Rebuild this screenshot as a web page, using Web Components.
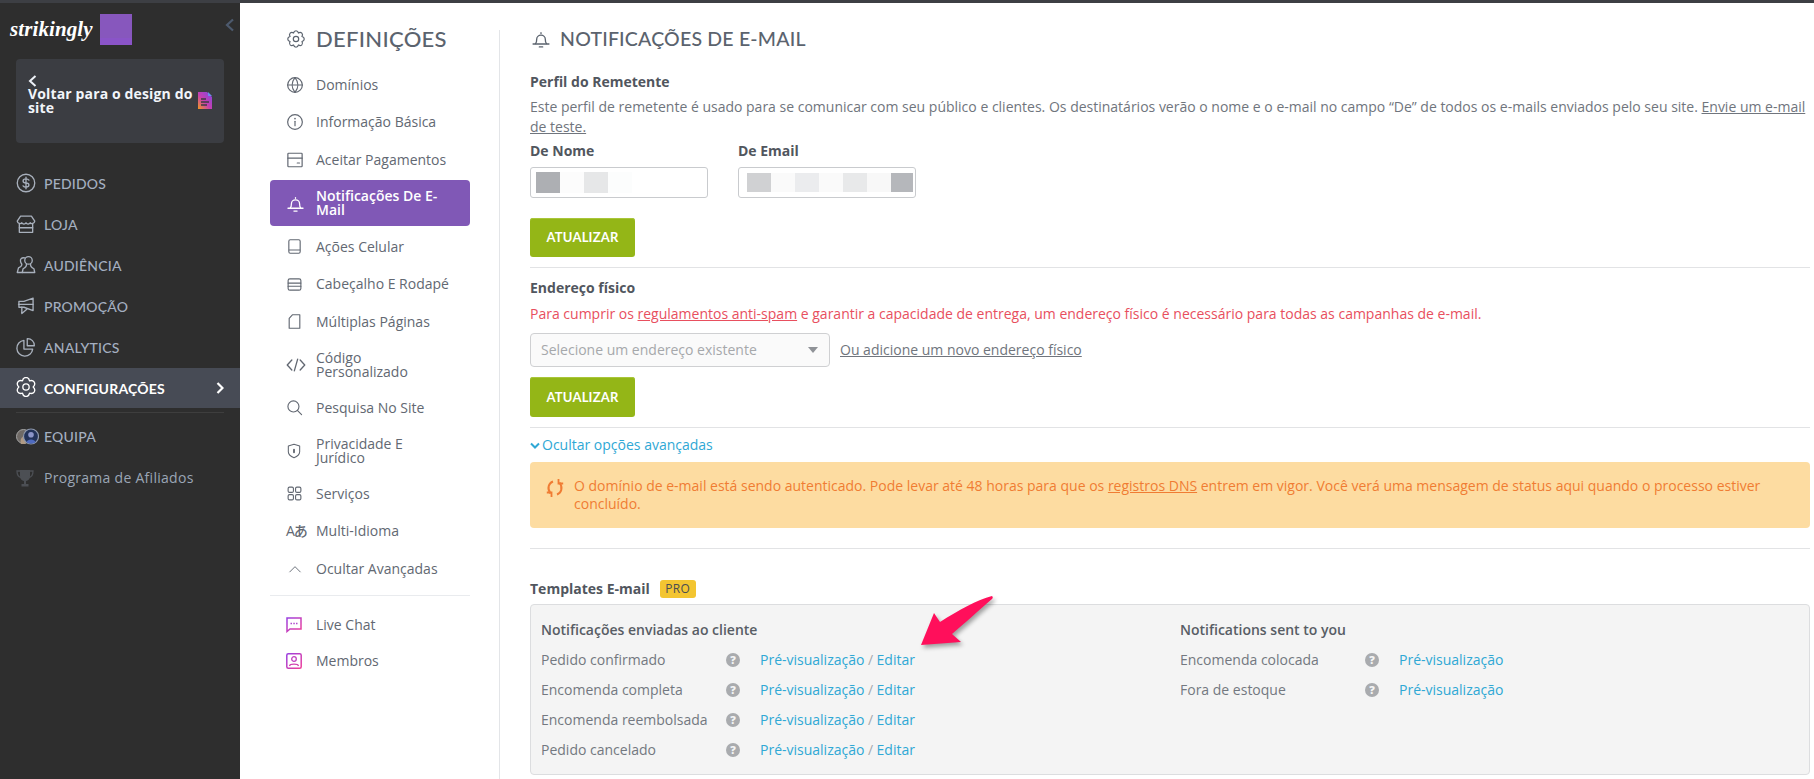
<!DOCTYPE html>
<html lang="pt"><head><meta charset="utf-8"><title>Notificações</title>
<style>
html,body{margin:0;padding:0;height:779px;overflow:hidden;background:#fff;font-family:"Open Sans",sans-serif}
</style></head><body>
<app-shell>
  <dark-sidebar slot="side"></dark-sidebar>
  <settings-menu slot="menu"></settings-menu>
  <email-panel slot="main"></email-panel>
</app-shell>
<script>
const S=(inner,vb='0 0 24 24',w=20,h=w,extra='')=>`<svg width="${w}" height="${h}" viewBox="${vb}" fill="none" stroke="currentColor" stroke-width="1.6" stroke-linecap="round" stroke-linejoin="round" ${extra}>${inner}</svg>`;
function gearPath(n,ro,ri,r0){let d='';for(let k=0;k<n;k++){const a=k*2*Math.PI/n-Math.PI/2,st=2*Math.PI/n;
 const p=(r,t)=>(12+r*Math.cos(t)).toFixed(2)+' '+(12+r*Math.sin(t)).toFixed(2);
 d+=(k?'L':'M')+p(ri,a-st*.5)+'Q'+p(ro*1.02,a-st*.3)+' '+p(ro,a)+'Q'+p(ro*1.02,a+st*.3)+' '+p(ri,a+st*.5);}
 return `<path d="${d}Z"/><circle cx="12" cy="12" r="${r0}"/>`;}
const gear=gearPath(8,11,8.6,3.6), gear6=gearPath(6,11.5,8.6,3.8);
const bell='<path d="M5.500 17.500c1-1 1.300-2.500 1.300-5a5.200 5.200 0 0 1 10.400 0c0 2.500.3 4 1.300 5"/><path d="M2.500 18h19"/><path d="M10 21.500h4"/><path d="M12 5.500v-1"/>';
const IC={
 dollar:'<circle cx="12" cy="12" r="10.500"/><path d="M15.500 8.500c-.7-1-2-1.500-3.500-1.500-2 0-3.500 1-3.500 2.500S10 12 12 12s3.500 1 3.500 2.500S14 17 12 17c-1.500 0-2.800-.5-3.500-1.500M12 5v14"/>',
 store:'<path d="M4 11.500V22h16V11.500"/><path d="M5.500 2.500h13l4 6c-.5 3-4 4-5.500 2-1 2-4 2-5 0-1 2-4 2-5 0-1.500 2-5 1-5.500-2z"/><path d="M4 16.500h16"/>',
 people:'<circle cx="15" cy="6.500" r="4.500"/><path d="M12.500 11c.5 2.500-1 4-4 5.500L7.500 21h15l-1-4.500c-3-1.500-4.500-3-4-5.500"/><path d="M10.500 3.500C7 2.500 4.500 5 5.500 8c.4 1.200 1 2.300 1.500 3 .2 2-1.500 3.500-4 4.500L1.500 21h6"/>',
 mega:'<path d="M20.500 2.500v15L9.500 13.500H3.500v-7h6z"/><path d="M3 10h17.500"/><path d="M7 13.500V21l6-5"/>',
 pie:'<path d="M9.500 4a9.500 9.500 0 1 0 10.500 10.500H9.500z"/><path d="M13.500 2a8 8 0 0 1 8.500 8.500h-8.500z"/>',
 globe:'<circle cx="12" cy="12" r="9.800"/><path d="M2.200 12h19.600M12 2.200c-5 6-5 13.600 0 19.600M12 2.200c5 6 5 13.600 0 19.600"/>',
 info:'<circle cx="12" cy="12" r="9.800"/><path d="M12 11v6"/><path d="M12 7.300v.4" stroke-width="2.200"/>',
 card:'<rect x="2.500" y="3" width="19" height="18" rx="1"/><path d="M2.500 9.500h19M15 16h3"/>',
 bell,
 book:'<rect x="4" y="2.500" width="16" height="19" rx="2"/><path d="M4.500 17h15"/>',
 layout:'<rect x="3" y="4" width="18" height="16" rx="2.500"/><path d="M3 10h18M3 14.500h18"/>',
 page:'<path d="M9 2.500h10.500v19h-15V7.500z"/>',
 code:'<path d="M7 6l-5.500 6L7 18M17 6l5.500 6L17 18M14 5l-4 14"/>',
 search:'<circle cx="10.500" cy="10.500" r="7.800"/><path d="M16 16l6 6"/>',
 shield:'<path d="M12 2l8.500 2.500v8.500c0 4-3.500 7-8.500 9-5-2-8.500-5-8.500-9V4.500z"/><path d="M12 10v4" stroke-width="2.800"/>',
 grid:'<rect x="3" y="3" width="7.500" height="7.500" rx="2"/><rect x="13.500" y="3" width="7.500" height="7.500" rx="2"/><rect x="3" y="13.500" width="7.500" height="7.500" rx="2"/><rect x="13.500" y="13.500" width="7.500" height="7.500" rx="2"/>',
 up:'<path d="M3 17l9-9 9 9"/>'
};
function def(name,html){customElements.define(name,class extends HTMLElement{
  constructor(){super();this.attachShadow({mode:'open'}).innerHTML=typeof html==='function'?html(this):html;}
});}

def('app-shell',`<style>
:host{display:block;width:1814px;height:779px;overflow:hidden}
.top{height:3px;background:#3d3f44}
.row{display:flex;height:776px}
</style><div class="top"></div><div class="row"><slot name="side"></slot><slot name="menu"></slot><slot name="main"></slot></div>`);

def('nav-row',`<style>
:host{display:flex;align-items:center;height:41px;padding-left:16px;padding-right:16px;color:#a4afc0;font:500 14px/1 Lato,sans-serif;letter-spacing:.2px;box-sizing:border-box}
:host([active]){height:40px;background:#474b55;color:#fff;font-weight:700}
:host([plain]){font:400 14px/1 "Open Sans",sans-serif;letter-spacing:.28px;color:#9ba6b6}
.i{width:28px;flex:none;display:flex;align-items:center;color:#a8b0bc}
:host([active]) .i{color:#fff}
.t{flex:1}
:host([active]) .t{padding-top:1px}
.c{display:flex}
</style><span class="i"><slot name="icon"></slot></span><span class="t"><slot></slot></span><span class="c"><slot name="end"></slot></span>`);

def('dark-sidebar',`<style>
:host{display:block;width:240px;flex:none;height:776px;background:#2e2e2e;color:#fff;box-sizing:border-box}
.head{display:flex;align-items:center;height:56px;padding:0 0 4px 10px;box-sizing:border-box;position:relative}
.logo{font:italic 700 21px/1 "Liberation Serif",serif;color:#fff;width:90px;letter-spacing:.1px}
.sq{width:32px;height:31px;background:linear-gradient(#8757bd 77%,#8a54c8 77%)}
.col{position:absolute;left:225px;top:15px;color:#4d5a6e}
.card{margin:0 16px;height:84px;background:#3b3d42;border-radius:4px;padding:16px 12px 0;box-sizing:border-box;font:700 14px/14px "Open Sans",sans-serif;color:#f2f5fa;letter-spacing:.14px}
.card .b{display:block;height:12px;color:#eef2f8}
.line{display:flex;align-items:center;gap:2px;margin-top:-2px}
.line span{width:168px;flex:none;padding-top:2px}
.nav{padding-top:20px}
hr{border:0;height:1px;background:#3e3e3e;margin:4px 16px 3px}
</style>
<div class="head"><span class="logo">strikingly</span><span class="sq"></span>
 <svg class="col" width="10" height="14" viewBox="0 0 10 14" fill="none" stroke="currentColor" stroke-width="2.200"><path d="M8 1.500L2 7l6 5.500"/></svg></div>
<div class="card"><svg class="b" width="9" height="12" viewBox="0 0 9 12" fill="none" stroke="currentColor" stroke-width="2"><path d="M7.500 1L2 6l5.500 5"/></svg>
 <div class="line"><span>Voltar para o design do<br>site</span>
 <svg width="14" height="17" viewBox="0 0 14 17"><defs><linearGradient id="g1" x1="0" y1="1" x2="1" y2="0"><stop offset="0" stop-color="#f29a1f"/><stop offset=".45" stop-color="#c73fb0"/><stop offset="1" stop-color="#7f47e0"/></linearGradient></defs><path d="M0 0h9l5 5v12H0z" fill="url(#g1)"/><path d="M10 0v4h4z" fill="#6c8de8"/><path d="M3 7h5M3 10h8M3 13h6" stroke="#3b3d42" stroke-width="1.400"/></svg></div></div>
<div class="nav">
<nav-row><span slot="icon">${S(IC.dollar)}</span>PEDIDOS</nav-row>
<nav-row><span slot="icon">${S(IC.store)}</span>LOJA</nav-row>
<nav-row><span slot="icon">${S(IC.people)}</span>AUDIÊNCIA</nav-row>
<nav-row><span slot="icon">${S(IC.mega)}</span>PROMOÇÃO</nav-row>
<nav-row><span slot="icon">${S(IC.pie)}</span>ANALYTICS</nav-row>
<nav-row active><span slot="icon">${S(gear6)}</span>CONFIGURAÇÕES<svg slot="end" width="8" height="12" viewBox="0 0 8 12" fill="none" stroke="#fff" stroke-width="2.200"><path d="M1.500 1l5 5-5 5"/></svg></nav-row>
<hr>
<nav-row><svg slot="icon" width="23" height="17" viewBox="0 0 23 17"><circle cx="7.500" cy="8.500" r="7" fill="#6f6a66" stroke="#a5a5a5" stroke-width="1"/><path d="M5 16c-1-3-.5-6 2-7.500 2 1 3 3 2.500 7.500z" fill="#b09a84"/><circle cx="15" cy="8.500" r="7.500" fill="#233359" stroke="#8f99ad" stroke-width="1.200"/><circle cx="15" cy="6.800" r="2.800" fill="#8c95c8"/><path d="M10.500 14c1-3.500 8-3.500 9 0-2 2-7 2-9 0z" fill="#4f6bc0"/></svg>EQUIPA</nav-row>
<nav-row plain><svg slot="icon" width="18" height="18" viewBox="0 0 18 18" fill="#4c4f54"><path d="M4 1h10v6c0 3-2 5-5 5s-5-2-5-5z"/><path d="M4 2H1c0 4 1.500 6 4 6.500M14 2h3c0 4-1.500 6-4 6.500" fill="none" stroke="#4c4f54" stroke-width="1.300"/><path d="M8 12h2v3H8zM5.500 15h7v2.500h-7z"/></svg>Programa de Afiliados</nav-row>
</div>`);

def('menu-item',`<style>
:host{display:flex;align-items:center;height:37.500px;padding-left:16px;width:200px;box-sizing:border-box;color:#626872;font:500 14px/14px "Open Sans",sans-serif;border-radius:4px;white-space:nowrap}
:host([two]){height:46px;margin:1.500px 0 1px}
:host([active]){background:#8058b6;color:#fff;font-weight:600;margin-bottom:2px}
.i{width:30px;flex:none;display:flex;align-items:center}
</style><span class="i"><slot name="icon"></slot></span><span><slot></slot></span>`);

def('settings-menu',`<style>
:host{display:block;width:259px;flex:none;height:776px;box-sizing:border-box;padding:27px 0 0 30px;position:relative}
.rule{position:absolute;left:259px;top:27px;bottom:0;width:1px;background:#e3e5e8}
h2{margin:0 0 18px;padding-left:17px;display:flex;align-items:center;gap:11px;font:500 22px/18px Lato,sans-serif;color:#5b636e;letter-spacing:.3px;height:18px}
.sep{height:1px;width:200px;background:#e9ebee;margin:7.500px 0 10px}
svg{display:block}
</style><div class="rule"></div>
<h2>${S(gear,'0 0 24 24',18)}DEFINIÇÕES</h2>
<menu-item><span slot="icon">${S(IC.globe,'0 0 24 24',18)}</span>Domínios</menu-item>
<menu-item><span slot="icon">${S(IC.info,'0 0 24 24',18)}</span>Informação Básica</menu-item>
<menu-item><span slot="icon">${S(IC.card,'0 0 24 24',18)}</span>Aceitar Pagamentos</menu-item>
<menu-item two active><span slot="icon">${S(bell,'0 0 24 24',19)}</span>Notificações De E-<br>Mail</menu-item>
<menu-item><span slot="icon">${S(IC.book,'0 0 24 24',17)}</span>Ações Celular</menu-item>
<menu-item><span slot="icon">${S(IC.layout,'0 0 24 24',17)}</span>Cabeçalho E Rodapé</menu-item>
<menu-item><span slot="icon">${S(IC.page,'0 0 24 24',17)}</span>Múltiplas Páginas</menu-item>
<menu-item two><span slot="icon">${S(IC.code,'0 0 24 24',20)}</span>Código<br>Personalizado</menu-item>
<menu-item><span slot="icon">${S(IC.search,'0 0 24 24',17)}</span>Pesquisa No Site</menu-item>
<menu-item two><span slot="icon">${S(IC.shield,'0 0 24 24',16)}</span>Privacidade E<br>Jurídico</menu-item>
<menu-item><span slot="icon">${S(IC.grid,'0 0 24 24',17)}</span>Serviços</menu-item>
<menu-item><span slot="icon" style="font:500 14px/1 'Open Sans','Noto Sans CJK JP',sans-serif;letter-spacing:-1px;white-space:nowrap">Aあ</span>Multi-Idioma</menu-item>
<menu-item><span slot="icon" style="padding-left:2px;display:block">${S(IC.up,'0 0 24 24',14)}</span>Ocultar Avançadas</menu-item>
<div class="sep"></div>
<menu-item><svg slot="icon" width="16" height="16" viewBox="0 0 16 16" fill="none"><defs><linearGradient id="g2" x1="0" y1="0" x2="1" y2="1"><stop offset="0" stop-color="#9a3fe0"/><stop offset="1" stop-color="#ef3f9a"/></linearGradient></defs><path d="M1 1h14v11H4l-3 2.500z" stroke="url(#g2)" stroke-width="1.500"/><path d="M4.500 6.500h1.500M7.300 6.500h1.500M10 6.500h1.500" stroke="#b04ad0" stroke-width="1.500"/></svg>Live Chat</menu-item>
<menu-item style="height:35px"><svg slot="icon" width="16" height="16" viewBox="0 0 16 16" fill="none"><defs><linearGradient id="g3" x1="0" y1="0" x2="1" y2="1"><stop offset="0" stop-color="#9a3fe0"/><stop offset="1" stop-color="#ef3f9a"/></linearGradient></defs><rect x=".8" y=".8" width="14.400" height="14.400" rx="1.500" stroke="url(#g3)" stroke-width="1.500"/><circle cx="8" cy="6" r="2.300" stroke="#c042c0" stroke-width="1.300"/><path d="M3.500 13c.5-2.500 8.500-2.500 9 0" stroke="#d040b0" stroke-width="1.300"/></svg>Membros</menu-item>`);

def('blur-input',h=>{
 const cols=(h.getAttribute('cols')||'').split(',');
 return `<style>
:host{display:flex;width:178px;height:31px;border:1px solid #c9cbce;border-radius:3px;box-sizing:border-box;padding:${h.getAttribute('pad')||'4px 0 4px 5px'};background:#fff}
i{display:block;height:100%;flex:none}
</style>${cols.map(c=>{const [col,w]=c.split(':');return `<i style="background:${col};width:${w||24}px"></i>`}).join('')}`;});

def('green-btn',`<style>
:host{display:flex;align-items:center;justify-content:center;width:105px;height:39px;background:#94b617;border-radius:3px;color:#fff;font:700 13px/1 Lato,sans-serif;box-shadow:inset 0 1px 0 #a9c63a;letter-spacing:.2px}
</style><slot></slot>`);

def('tpl-row',h=>`<style>
:host{display:flex;align-items:center;height:30px;font:400 14px/20px "Open Sans",sans-serif;color:#737880}
.l{width:185px;flex:none;white-space:nowrap}
.q{width:14px;height:14px;border-radius:50%;background:#a9abae;color:#f4f4f4;font:800 11px/14px "Open Sans",sans-serif;text-align:center;flex:none;margin-right:20px}
a{color:#2fa8d5}
.s{color:#a5a8ac;padding:0 3.500px}
</style><span class="l">${h.getAttribute('label')}</span><span class="q">?</span><a>Pré-visualização</a>${h.hasAttribute('edit')?'<span class="s">/</span><a>Editar</a>':''}`);

def('email-panel',`<style>
:host{display:block;flex:1;min-width:0;height:776px;box-sizing:border-box;padding:0 4px 0 31px;position:relative;font:400 14px/20px "Open Sans",sans-serif;color:#70757d}
h1{margin:0;height:69px;padding-top:27px;box-sizing:border-box;display:flex;align-items:flex-start;gap:9px;font:500 19.500px/18px Lato,sans-serif;color:#5b636e;letter-spacing:.2px}
h1 svg{margin-left:1px;margin-top:-1px}
.h{font-weight:700;color:#51565e;height:20px;line-height:20px}
p{margin:0}
u{text-decoration:underline}
.fields{display:flex;gap:30px;margin-top:4px}
.fields>div{width:178px}
.fields .h{margin-bottom:6px}
green-btn{margin-top:20px}
hr{border:0;height:1px;background:#e2e3e5;margin:0}
.h2{margin-top:10px}
.red{color:#e84f5e;margin-top:6px;height:20px}
.sel{display:flex;align-items:center;gap:10px;margin-top:9px}
.box{width:300px;height:34px;box-sizing:border-box;border:1px solid #cfd0d2;border-radius:4px;background:#fafafa;color:#a6a8ab;padding:0 10px;display:flex;justify-content:space-between;align-items:center}
.tri{width:0;height:0;border:5px solid transparent;border-top:6px solid #8f9297;border-bottom:0;margin-right:1px}
.adv{color:#2fa8d5;display:flex;align-items:center;gap:2px;height:20px;margin-top:7px}
.alert{margin-top:7px;height:66px;background:#fddca1;border-radius:4px;color:#f07c33;display:flex;padding:15px 15px 0 15px;box-sizing:border-box;line-height:18px}
.alert svg{flex:none;margin:1px 10px 0 1px}
.tt{display:flex;align-items:center;gap:10px;margin-top:30px;height:20px;font-weight:700}
.pro{background:#f3c531;color:#4b4d52;font:500 12px/18px "Open Sans",sans-serif;width:36px;height:18px;text-align:center;border-radius:3px;letter-spacing:.4px}
.panel{margin-top:5px;height:171px;box-sizing:border-box;background:#f4f4f4;border:1px solid #dcdddf;border-radius:4px;padding:15px 10px 0;display:grid;grid-template-columns:639px 1fr}
.ph{font-weight:600;color:#585d65;height:25px;line-height:20px}
.arrow{position:absolute;left:420px;top:590px;overflow:visible}
</style>
<h1>${S(bell,'0 0 24 24',20)}NOTIFICAÇÕES DE E-MAIL</h1>
<div class="h">Perfil do Remetente</div>
<p style="margin-top:5px;white-space:nowrap">Este perfil de remetente é usado para se comunicar com seu público e clientes. Os destinatários verão o nome e o e-mail no campo “De” de todos os e-mails enviados pelo seu site. <u>Envie um e-mail</u><br><u>de teste.</u></p>
<div class="fields">
 <div><div class="h">De Nome</div><blur-input cols="#adafb3,#fcfcfc,#e6e7e8,#fcfdfd"></blur-input></div>
 <div><div class="h">De Email</div><blur-input pad="5px 0 5px 8px" cols="#d0d1d3,#fafafa,#ebecee,#fafafa,#e8e9ea,#f8f8f8,#b5b7bb:22"></blur-input></div>
</div>
<green-btn>ATUALIZAR</green-btn>
<hr style="margin-top:10px">
<div class="h h2">Endereço físico</div>
<div class="red">Para cumprir os <u>regulamentos anti-spam</u> e garantir a capacidade de entrega, um endereço físico é necessário para todas as campanhas de e-mail.</div>
<div class="sel"><div class="box">Selecione um endereço existente<span class="tri"></span></div><u>Ou adicione um novo endereço físico</u></div>
<green-btn style="margin-top:10px;height:40px">ATUALIZAR</green-btn>
<hr style="margin-top:10px">
<div class="adv"><svg width="10" height="7" viewBox="0 0 10 7" fill="none" stroke="#2fa8d5" stroke-width="2"><path d="M1 1.500l4 4 4-4"/></svg>Ocultar opções avançadas</div>
<div class="alert"><svg width="18" height="20" viewBox="0 0 18 20" fill="none" stroke="#f07c33" stroke-width="2"><path d="M7 3.500C3 5 .5 10 4.500 15.500"/><path d="M11 16.500C15 15 17.500 10 13.500 4.500"/><path d="M.8 14.500h4.700v4.500M17.200 5.500h-4.700V1" stroke-width="1.800"/></svg><div style="white-space:nowrap">O domínio de e-mail está sendo autenticado. Pode levar até 48 horas para que os <u>registros DNS</u> entrem em vigor. Você verá uma mensagem de status aqui quando o processo estiver<br>concluído.</div></div>
<hr style="margin-top:20px">
<div class="tt"><span class="h">Templates E-mail</span><span class="pro">PRO</span></div>
<div class="panel">
 <div><div class="ph">Notificações enviadas ao cliente</div>
  <tpl-row edit label="Pedido confirmado"></tpl-row><tpl-row edit label="Encomenda completa"></tpl-row><tpl-row edit label="Encomenda reembolsada"></tpl-row><tpl-row edit label="Pedido cancelado"></tpl-row></div>
 <div><div class="ph">Notifications sent to you</div>
  <tpl-row label="Encomenda colocada"></tpl-row><tpl-row label="Fora de estoque"></tpl-row></div>
</div>
<svg class="arrow" width="76" height="52" viewBox="0 0 76 52" style="filter:drop-shadow(2px 3px 2px rgba(0,0,0,.35))"><path d="M2 52L15 20 21 29C40 17 58 7 73 3 74 4 74 5 73 6 60 17 45 31 33 41L42 49z" fill="#ff0f5b"/></svg>`);
</script>
</body></html>
